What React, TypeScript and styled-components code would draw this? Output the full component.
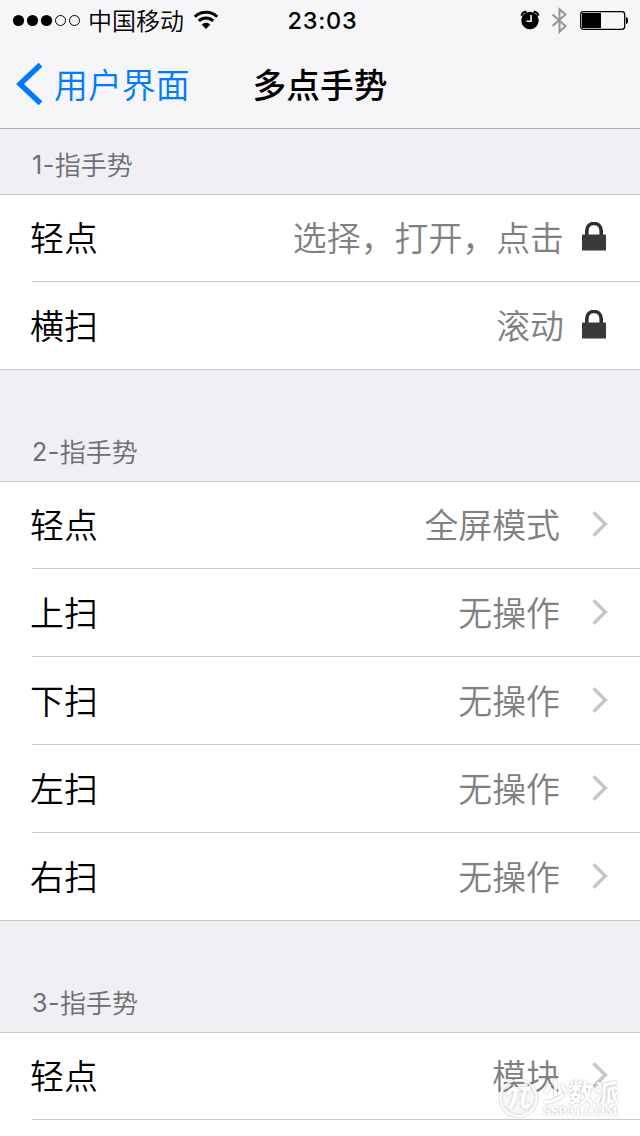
import React from "react";
import styled, { createGlobalStyle } from "styled-components";

const cjk = `"Noto Sans CJK SC", sans-serif`;

const GlobalStyle = createGlobalStyle`
  * { box-sizing: border-box; }
  body {
    margin: 0;
    background: #efeff4;
    font-family: Inter, ${cjk};
    overflow: hidden;
  }
  svg { display: block; flex: none; }
`;

const Screen = styled.div`
  position: relative;
  width: 640px;
  height: 1136px;
  overflow: hidden;
  background: #efeff4;
  color: #000;
`;

const Top = styled.header`
  height: 129px;
  background: #f6f6f8;
  border-bottom: 1px solid #a9a9b0;
`;

const StatusBar = styled.div`
  display: grid;
  grid-template-columns: 1fr auto 1fr;
  align-items: center;
  height: 40px;
  padding: 0 11px 0 12px;
`;

const Side = styled.div<{ $end?: boolean }>`
  display: flex;
  align-items: center;
  justify-content: ${(p) => (p.$end ? "flex-end" : "flex-start")};
`;

const Carrier = styled.span`
  margin: 0 9px 0 7px;
  font: 350 24px/40px ${cjk};
`;

const Clock = styled.span`
  padding: 2px 0 0 4px;
  font: 500 23.5px/38px Inter, sans-serif;
  letter-spacing: 0.8px;
`;

const NavBar = styled.nav`
  display: grid;
  grid-template-columns: 1fr auto 1fr;
  align-items: center;
  height: 88px;
  padding: 0 16px;
`;

const Back = styled.a`
  display: flex;
  align-items: center;
  color: #007aff;
  font: 350 33.9px/48px ${cjk};
  gap: 11px;
`;

const Title = styled.h1`
  margin: 0;
  font: 500 33.7px/48px ${cjk};
`;

const GroupHeader = styled.h2<{ $first?: boolean }>`
  display: flex;
  align-items: flex-end;
  height: ${(p) => (p.$first ? 65 : 111)}px;
  margin: 0;
  padding: 0 32px 12px;
  color: #6d6d72;
  font: 350 26px/36px ${cjk};
`;

const Digit = styled.span`
  font: 400 25px/34px Inter, sans-serif;
  letter-spacing: 0.5px;
`;

const List = styled.ul`
  margin: 0;
  padding: 0;
  list-style: none;
  background: linear-gradient(#c8c7cc, #c8c7cc) top / 100% 1px no-repeat #fff;
`;

const Row = styled.li`
  display: flex;
  align-items: stretch;
  height: 88px;
  padding-left: 32px;
  &:last-child {
    border-bottom: 1px solid #c8c7cc;
  }
`;

const RowBody = styled.div`
  flex: 1;
  display: flex;
  align-items: center;
  padding: 0 32px 2px 0;
  font: 350 33.9px/48px ${cjk};
  ${Row}:not(:last-child) & {
    border-bottom: 1px solid #c8c7cc;
  }
`;

const Label = styled.span`
  flex: 1;
  margin-left: -2px;
`;

const Value = styled.span<{ $locked?: boolean }>`
  color: #808080;
  margin-right: ${(p) => (p.$locked ? 18 : 31)}px;
`;

const PartialRow = styled(Row)`
  &:last-child {
    border-bottom: 0;
  }
  & > ${RowBody} {
    border-bottom: 1px solid #c8c7cc;
  }
`;

const Tail = styled.div`
  height: 16px;
  background: #fff;
`;

const Watermark = styled.div`
  position: absolute;
  left: 499px;
  top: 1077px;
  display: flex;
  gap: 5px;
  color: #fff;
  filter: drop-shadow(0 0 1px rgba(0, 0, 0, 0.36));
  opacity: 0.85;
`;

const WatermarkText = styled.div`
  display: flex;
  flex-direction: column;
`;

const WatermarkName = styled.span`
  font: 700 25.5px/28px ${cjk};
`;

const WatermarkSite = styled.span`
  font: 700 13.4px/12px "Liberation Serif", serif;
  letter-spacing: 0.2px;
`;

const Signal = () => (
  <svg width="69" height="40" viewBox="0 0 69 40">
    {[0, 1, 2].map((i) => (
      <circle key={i} cx={6.5 + i * 14} cy="20.5" r="5.6" />
    ))}
    {[3, 4].map((i) => (
      <circle key={i} cx={6.5 + i * 14} cy="20.5" r="5" fill="none" stroke="#000" />
    ))}
  </svg>
);

const Wifi = () => (
  <svg width="26" height="40" viewBox="0 0 26 40">
    <g fill="none" stroke="#000" strokeWidth="3">
      <path d="M1.8 16.7a16 16 0 0 1 22.4 0" />
      <path d="M5.8 20.9a10.3 10.3 0 0 1 14.4 0" />
    </g>
    <path d="M8.7 24.6a6 6 0 0 1 8.6 0L13 29z" />
  </svg>
);

const Alarm = () => (
  <svg width="20" height="40" viewBox="0 0 20 40">
    <circle cx="10" cy="20.5" r="8.7" />
    <path d="M1.5 15.8a5 5 0 0 1 5-4M18.5 15.8a5 5 0 0 0-5-4" fill="none" stroke="#000" strokeWidth="2" />
    <path d="M11 15v6.3H6.5" fill="none" stroke="#f6f6f8" strokeWidth="1.6" />
  </svg>
);

const BluetoothIcon = styled.svg`
  margin: 0 12px 0 11px;
`;

const Bluetooth = () => (
  <BluetoothIcon width="17" height="40" viewBox="0 0 17 40">
    <path d="M1.5 14.5l13 11.5-6 5.8V9.2l6 5.3L1.5 26" fill="none" stroke="#949496" strokeWidth="2" />
  </BluetoothIcon>
);

const Battery = () => (
  <svg width="49" height="40" viewBox="0 0 49 40">
    <rect x=".7" y="11.6" width="44" height="17.8" rx="2.8" fill="none" stroke="#000" strokeWidth="1.3" />
    <rect x="2" y="13" width="19" height="15" />
    <path d="M46 17.2c2.8.2 2.8 6.6 0 6.8z" />
  </svg>
);

const Lock = () => (
  <svg width="26" height="30" viewBox="0 0 26 30">
    <path d="M4.8 13V9c0-10 14.4-10 14.4 0v4" fill="none" stroke="#303030" strokeWidth="3.6" />
    <rect x="0" y="12.5" width="24" height="16" rx=".8" fill="#393939" />
  </svg>
);

const Chevron = () => (
  <svg width="17" height="30" viewBox="0 0 17 30">
    <path d="M2.5 3.2L14.3 15 2.5 26.8" fill="none" stroke="#c7c7cc" strokeWidth="3.6" />
  </svg>
);

const BackArrow = () => (
  <svg width="27" height="44" viewBox="0 0 27 44">
    <path d="M24.5 2.8L4 22l20.5 19.2" fill="none" stroke="#007aff" strokeWidth="5.4" />
  </svg>
);

const Pi = () => (
  <svg width="39" height="42" viewBox="0 0 39 42">
    <circle cx="19.5" cy="21" r="18" fill="rgba(255,255,255,.12)" stroke="#fff" strokeWidth="2" />
    <path
      d="M8.5 18c2-5 4-6 8-6h15M17 12c0 9-3 14-6 19M26 12c-2 9-4 18 0 18 2 0 3-1 4-3"
      fill="none"
      stroke="#fff"
      strokeWidth="4"
    />
  </svg>
);

type Entry = { label: string; value: string; locked?: boolean };

const one: Entry[] = [
  { label: "轻点", value: "选择，打开，点击", locked: true },
  { label: "横扫", value: "滚动", locked: true },
];

const two: Entry[] = [
  { label: "轻点", value: "全屏模式" },
  { label: "上扫", value: "无操作" },
  { label: "下扫", value: "无操作" },
  { label: "左扫", value: "无操作" },
  { label: "右扫", value: "无操作" },
];

const Cells = ({ label, value, locked }: Entry) => (
  <RowBody>
    <Label>{label}</Label>
    <Value $locked={locked}>{value}</Value>
    {locked ? <Lock /> : <Chevron />}
  </RowBody>
);

export default function App() {
  return (
    <Screen>
      <GlobalStyle />
      <Top>
        <StatusBar>
          <Side>
            <Signal />
            <Carrier>中国移动</Carrier>
            <Wifi />
          </Side>
          <Clock>23:03</Clock>
          <Side $end>
            <Alarm />
            <Bluetooth />
            <Battery />
          </Side>
        </StatusBar>
        <NavBar>
          <Back>
            <BackArrow />
            用户界面
          </Back>
          <Title>多点手势</Title>
        </NavBar>
      </Top>
      <GroupHeader $first>
        <Digit>1-</Digit>指手势
      </GroupHeader>
      <List>
        {one.map((e) => (
          <Row key={e.label}>
            <Cells {...e} />
          </Row>
        ))}
      </List>
      <GroupHeader>
        <Digit>2-</Digit>指手势
      </GroupHeader>
      <List>
        {two.map((e) => (
          <Row key={e.label}>
            <Cells {...e} />
          </Row>
        ))}
      </List>
      <GroupHeader>
        <Digit>3-</Digit>指手势
      </GroupHeader>
      <List>
        <PartialRow>
          <Cells label="轻点" value="模块" />
        </PartialRow>
      </List>
      <Tail />
      <Watermark>
        <Pi />
        <WatermarkText>
          <WatermarkName>少数派</WatermarkName>
          <WatermarkSite>SSPAI.COM</WatermarkSite>
        </WatermarkText>
      </Watermark>
    </Screen>
  );
}
